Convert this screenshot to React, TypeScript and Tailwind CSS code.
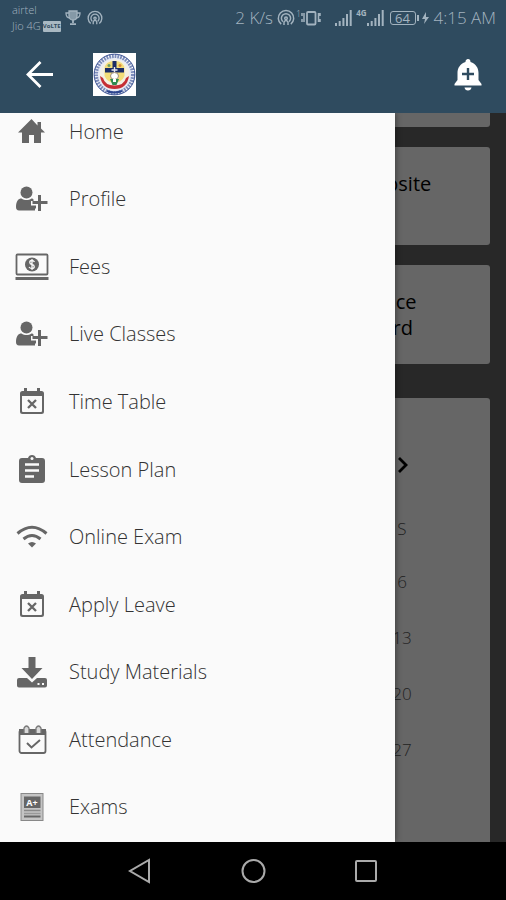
import type { ReactNode } from "react";

const volte = "w-[18px] rounded-[1px] bg-[#a9b8c2] text-center text-[6px] leading-[11px] font-bold text-[#2f4b5f]";

function Hotspot({ className }: { className: string }) {
  return (
    <svg viewBox="0 0 18 18" className={className} fill="none" stroke="currentColor" strokeWidth="1.5">
      <path d="M4.2 15.2a7.700 7.700 0 1 1 9.6 0" />
      <path d="M5.8 12.6a4.6 4.6 0 1 1 6.4 0" />
      <circle cx="9" cy="9.3" r="1.3" />
      <path d="M7 16v-3q2-3 4 0v3" />
    </svg>
  );
}

function Trophy() {
  return (
    <svg viewBox="0 0 16 16" className="size-4" fill="none" stroke="currentColor" strokeWidth="1.3">
      <path d="M4 1h8v5c0 3-2 4-4 4s-4-1-4-4z" fill="currentColor" fillOpacity=".75" />
      <path d="M4 3H1c0 3 1 5 4 5M12 3h3c0 3-1 5-4 5" />
      <path d="M8 10v3M5 14.2h6" strokeWidth="1.8" />
    </svg>
  );
}

function Vibrate() {
  return (
    <svg viewBox="0 0 20 16" className="h-4 w-5" fill="none" stroke="currentColor" strokeWidth="1.8">
      <rect x="6" y="2" width="8.500" height="12.500" rx="1" />
      <path d="M3 3v9M17.500 3v9M1 3v3M1 9v3M19 3v3M19 9v3" strokeWidth="1.500" />
    </svg>
  );
}

function Signal() {
  return (
    <svg viewBox="0 0 17 16" className="h-4 w-[17px]" fill="currentColor">
      <path d="M0 13h2v3H0zM3.700 11h2v5h-2zM7.400 8h2v8h-2zM11 4h2v12h-2zM14.700 0h2v16h-2z" />
    </svg>
  );
}

function Crest() {
  return (
    <svg viewBox="0 0 43 43" className="block size-[43px]">
      <rect width="43" height="43" fill="#fff" />
      <circle cx="21.500" cy="21.500" r="18.500" fill="#e9ecf5" stroke="#7c8cba" strokeWidth="4" strokeDasharray="1.800 1" />
      <circle cx="21.500" cy="21.500" r="20.400" fill="none" stroke="#3f5695" strokeWidth="1" />
      <circle cx="21.500" cy="21" r="14.500" fill="#f4f0e2" />
      <path d="M11.500 16Q12 8 21.500 8Q31 8 31.500 16V23Q29 29 21.500 30Q14 29 11.500 23Z" fill="#f3dd78" />
      <path d="M19.500 8h4v7h7.500v4.500H12V15h7.500z" fill="#1b2c66" />
      <path d="M21.500 14v6M18.500 17h6" stroke="#e7e8f0" strokeWidth="1.400" />
      <circle cx="16" cy="12.500" r="1.500" fill="#6b9d66" />
      <circle cx="27" cy="12.500" r="1.500" fill="#d98b3c" />
      <ellipse cx="21.500" cy="23" rx="4" ry="3.500" fill="#fff" stroke="#a08c78" />
      <path d="M17 26h9l-2.500 6h-4z" fill="#2f8a4e" />
      <path d="M20 26h3v3h-3z" fill="#fff" />
      <path d="M7 23Q9 36 21.500 36Q34 36 36 23L33 25Q31 32.500 21.500 32.500Q12 32.500 10 25Z" fill="#c52f35" />
      <path d="M14 38q7 3 15 0" stroke="#2d468f" strokeWidth="2" fill="none" />
    </svg>
  );
}

function Glyph({ children }: { children: ReactNode }) {
  return (
    <svg viewBox="0 0 34 34" className="size-[34px] shrink-0" fill="#666" aria-hidden="true">
      {children}
    </svg>
  );
}

const home = (
  <Glyph>
    <path d="M16.500 4 3 17.500h4V28h7v-8h5v8h7V17.500h4l-4-4V7h-3.500v3.500z" />
  </Glyph>
);
const person = (
  <Glyph>
    <circle cx="11.500" cy="10.500" r="6" />
    <path d="M1 25c0-6 2.500-8.500 5.500-8.500 3 2 7 2 10 0 1 0 1.500.3 2 1V19H16v4.500h5v3h-1V28.500H4c-2 0-3-1.300-3-3.500z" />
    <path d="M23 13h3v6h6.500v3H26v7h-3v-7h-5.500v-3H23z" />
  </Glyph>
);
const cash = (
  <Glyph>
    <rect x="1.500" y="4.500" width="31" height="20" rx="1" fill="none" stroke="#666" strokeWidth="1.800" />
    <circle cx="17" cy="14.500" r="7" />
    <path d="M19.500 12q-1-1.500-2.500-1.500c-3 0-3 3.500 0 4s3 4 0 4q-2 0-3-1.500M17 9v11" stroke="#fafafa" strokeWidth="1.300" fill="none" />
    <path d="M.500 27h33v3H.500z" />
  </Glyph>
);
const calendarX = (
  <Glyph>
    <path d="M9 3h3v3h10V3h3v3h1.500Q29 6 29 8.500v18q0 2.500-2.500 2.500h-19Q5 29 5 26.500v-18Q5 6 7.500 6H9zM7 11v15q0 1 1 1h18q1 0 1-1V11z" fillRule="evenodd" />
    <path d="m13 15 8 8m0-8-8 8" stroke="#666" strokeWidth="2.300" />
  </Glyph>
);
const clipboard = (
  <Glyph>
    <path d="M7 5h6a4.200 4.200 0 0 1 8 0h6q3 0 3 3v19q0 3-3 3H7q-3 0-3-3V8q0-3 3-3z" />
    <circle cx="17" cy="5.500" r="1.500" fill="#fafafa" />
    <path d="M10 11.500h14M10 17.500h14M10 23.500h9" stroke="#fafafa" strokeWidth="2.300" />
  </Glyph>
);
const wifi = (
  <Glyph>
    <path d="M2.500 13.500Q17 1 31.500 13.500M8.500 19Q17 12 25.500 19" stroke="#666" strokeWidth="3" fill="none" />
    <path d="M13 23.500q4-3 8 0l-4 4z" />
  </Glyph>
);
const download = (
  <Glyph>
    <path d="M13.500 2h7v11H27.500L17 24 6.500 13h7z" />
    <path d="M4 23h8l5 4.500 5-4.500h8q2 0 2 2v5.500q0 2-2 2H4q-2 0-2-2V25q0-2 2-2z" />
    <path d="M22.500 29h2M27 29h2" stroke="#fafafa" strokeWidth="2" />
  </Glyph>
);
const calendarCheck = (
  <Glyph>
    <rect x="4.500" y="7" width="26" height="23" rx="2" fill="none" stroke="#666" strokeWidth="1.800" />
    <path d="M4 6h27v6H4z" />
    <path d="M9 10V5q2.500-4 5 0v5M21 10V5q2.500-4 5 0v5" fill="#d8d8d8" stroke="#777" strokeWidth="1.300" />
    <path d="m12 20 4.500 4.500L25 17" fill="none" stroke="#666" strokeWidth="2" />
  </Glyph>
);
const report = (
  <Glyph>
    <rect x="6" y="3.500" width="22" height="27" fill="#c4c4c4" stroke="#888" />
    <path d="M9 6.500h16.500V18H9z" />
    <text x="17" y="15.500" textAnchor="middle" fontSize="9" fontWeight="700" fill="#fff">A+</text>
    <path d="M9 20.500h16.500" stroke="#888" strokeWidth="1.500" />
    <path d="M9 23.500h16.500" stroke="#999" strokeWidth="1.500" />
    <path d="M9 26.500h16.500" stroke="#666" strokeWidth="2" />
  </Glyph>
);

const items = [
  { label: "Home", icon: home },
  { label: "Profile", icon: person },
  { label: "Fees", icon: cash },
  { label: "Live Classes", icon: person },
  { label: "Time Table", icon: calendarX },
  { label: "Lesson Plan", icon: clipboard },
  { label: "Online Exam", icon: wifi },
  { label: "Apply Leave", icon: calendarX },
  { label: "Study Materials", icon: download },
  { label: "Attendance", icon: calendarCheck },
  { label: "Exams", icon: report },
];

export default function App() {
  return (
    <div className="flex h-screen flex-col overflow-hidden bg-black font-['Open_Sans','Noto_Sans',sans-serif]">
      <header className="shrink-0 bg-[#2f4b5f]">
        <div className="flex h-9 items-center justify-between pr-2.5 pl-3 text-[#a3b3bf]">
          <div className="flex items-center gap-1">
            <div className="text-[11px] leading-4 font-light">
              <p>airtel</p>
              <p className="flex items-center gap-0.5">
                Jio 4G <span className={volte}>VoLTE</span>
              </p>
            </div>
            <Trophy />
            <Hotspot className="ml-0.5 size-4" />
          </div>
          <div className="flex items-center text-[17px] font-light">
            <span>2 K/s</span>
            <Hotspot className="ml-1 size-[18px]" />
            <sup className="ml-px text-[9px]">1</sup>
            <Vibrate />
            <span className="ml-3.5"><Signal /></span>
            <span className="ml-1 self-start text-[8px] leading-4 font-bold">4G</span>
            <Signal />
            <span className="ml-1.5 w-[26px] rounded-[3px] border border-current text-center text-[13px] leading-3 font-normal">64</span>
            <svg viewBox="0 0 14 14" className="h-3.5 w-3.5" fill="currentColor">
              <path d="M1 4h2v6H1zM10 1 6 8h3l-1 5 5-7h-3z" />
            </svg>
            <span className="ml-1">4:15 AM</span>
          </div>
        </div>
        <div className="flex h-[77px] items-center pr-6 pl-[26px]">
          <button aria-label="Back" className="text-white">
            <svg viewBox="0 0 28 28" className="block size-7" fill="none" stroke="currentColor" strokeWidth="2.800">
              <path d="M27 13.500H2M14.500 1 2 13.500 14.500 26" />
            </svg>
          </button>
          <div className="ml-[39px]"><Crest /></div>
          <button aria-label="Add notification" className="ml-auto text-white">
            <svg viewBox="0 0 28 34" className="block h-[34px] w-7" fill="currentColor">
              <path d="M14 1q2.500 0 2.500 3C22 6 24.500 10 24.500 15v7l3 4v1.500H.500V26l3-4v-7C3.500 10 6 6 11.500 4 11.500 1 14 1 14 1zM10.500 29.500h7q-.5 3-3.500 3t-3.500-3z" />
              <path d="M14 10v12M8 16h12" stroke="#2f4b5f" strokeWidth="2.400" />
            </svg>
          </button>
        </div>
      </header>

      <main className="relative min-h-0 flex-1 overflow-hidden bg-[#282828]">
        <div className="flex h-full flex-col pr-4 pl-[57%] text-xl leading-[26px] text-black">
          <div className="h-3.5 shrink-0 rounded-b-[3px] bg-[#666]" />
          <a href="#website" className="mt-5 block h-[98px] shrink-0 rounded-[3px] bg-[#666] pt-6 pl-[68px]">Website</a>
          <a href="#notice" className="mt-5 block h-[99px] shrink-0 rounded-[3px] bg-[#666] pt-6 pl-[68px]">
            <p className="w-min">Notice Board</p>
          </a>
          <section className="mt-[34px] flex min-h-0 flex-1 flex-col items-end rounded-t-[3px] bg-[#666] pt-[55px] pr-[78px]">
            <button aria-label="Next month">
              <svg viewBox="0 0 18 24" className="block h-6 w-[18px]" fill="none" stroke="currentColor" strokeWidth="2.800">
                <path d="m5 5 7 7-7 7" />
              </svg>
            </button>
            <ol className="mt-[39px] w-5 text-center text-[17px] font-light text-[#222]">
              <li className="h-[53px]">S</li>
              <li className="h-14">6</li>
              <li className="h-14">13</li>
              <li className="h-14">20</li>
              <li className="h-14">27</li>
            </ol>
          </section>
        </div>

        <nav className="absolute inset-y-0 left-0 w-[78%] overflow-hidden bg-[#fafafa] shadow-[1px_0_6px_#0006]">
          <ul className="flex h-full flex-col pb-px">
            {items.map((item) => (
              <li key={item.label} className="min-h-0 flex-1 first:-mt-[15px]">
                <a href="#menu" className="flex h-full items-center gap-5 pl-[15px] text-xl font-light text-[#333]">
                  {item.icon}
                  {item.label}
                </a>
              </li>
            ))}
          </ul>
        </nav>
      </main>

      <footer className="flex h-[58px] shrink-0 items-center justify-center gap-[87px] text-[#aaa]">
        <button aria-label="Back">
          <svg viewBox="0 0 26 26" className="block size-[26px]" fill="none" stroke="currentColor" strokeWidth="2">
            <path d="M22 2v22L3 13z" />
          </svg>
        </button>
        <button aria-label="Home">
          <svg viewBox="0 0 26 26" className="block size-[26px]" fill="none" stroke="currentColor" strokeWidth="2">
            <circle cx="13.500" cy="13" r="11" />
          </svg>
        </button>
        <button aria-label="Recent apps">
          <svg viewBox="0 0 26 26" className="block size-[26px]" fill="none" stroke="currentColor" strokeWidth="2">
            <rect x="3" y="3" width="20" height="20" rx="1" />
          </svg>
        </button>
      </footer>
    </div>
  );
}
